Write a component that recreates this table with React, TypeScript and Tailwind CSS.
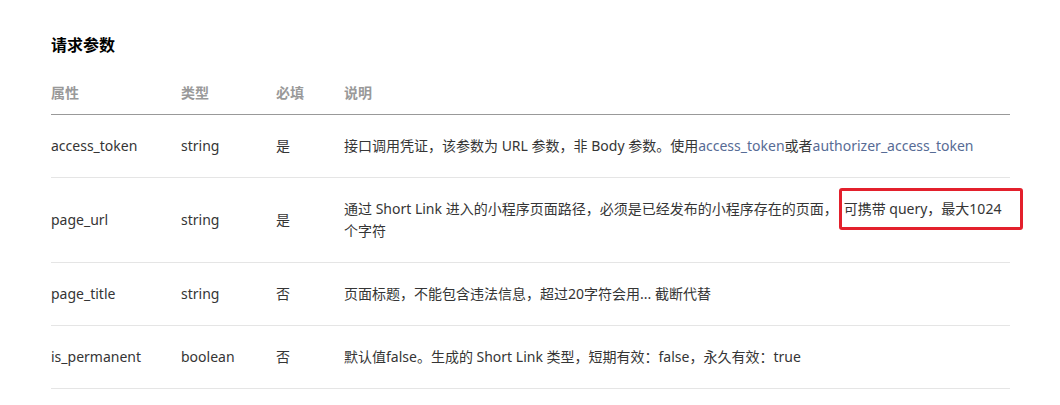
const LINK = 'text-[#576b95]';

type Row = {
  name: string;
  type: string;
  required: string;
  desc: React.ReactNode;
};

const ROWS: Row[] = [
  {
    name: 'access_token',
    type: 'string',
    required: '是',
    desc: (
      <>
        接口调用凭证，该参数为 URL 参数，非 Body 参数。使用<span className={LINK}>access_token</span>或者
        <span className={LINK}>authorizer_access_token</span>
      </>
    ),
  },
  {
    name: 'page_url',
    type: 'string',
    required: '是',
    desc: (
      <>
        通过 Short Link 进入的小程序页面路径，必须是已经发布的小程序存在的页面，
        <span className="relative ml-[6px] whitespace-nowrap">
          可携带 query，最大1024
          {/* red annotation box */}
          <span className="absolute -left-[5px] -right-[22px] -top-[11px] -bottom-[12px] border-[3px] border-[#e3202c] rounded-[3px] pointer-events-none" />
        </span>
        个字符
      </>
    ),
  },
  {
    name: 'page_title',
    type: 'string',
    required: '否',
    desc: '页面标题，不能包含违法信息，超过20字符会用... 截断代替',
  },
  {
    name: 'is_permanent',
    type: 'boolean',
    required: '否',
    desc: '默认值false。生成的 Short Link 类型，短期有效：false，永久有效：true',
  },
];

export default function App() {
  return (
    <div
      className="w-[1060px] h-[405px] bg-white pl-[51px] pr-[50px] pt-[33px] text-[#353535] overflow-hidden"
      style={{ fontFamily: '"Noto Sans", "Noto Sans CJK SC", sans-serif' }}
    >
      <h2 className="text-base leading-6 font-bold text-black">请求参数</h2>

      <table className="mt-[15px] w-full border-collapse text-sm leading-[22px]">
        <thead>
          <tr className="border-b border-[#999]">
            <th className="w-[130px] pt-[10px] pb-[10px] text-left font-bold text-[#999]">属性</th>
            <th className="w-[95px] pt-[10px] pb-[10px] text-left font-bold text-[#999]">类型</th>
            <th className="w-[68px] pt-[10px] pb-[10px] text-left font-bold text-[#999]">必填</th>
            <th className="pt-[10px] pb-[10px] text-left font-bold text-[#999]">说明</th>
          </tr>
        </thead>
        <tbody>
          {ROWS.map((row) => (
            <tr key={row.name} className="border-b border-[#e5e5e5]">
              <td className="py-5 align-middle">{row.name}</td>
              <td className="py-5 align-middle">{row.type}</td>
              <td className="py-5 align-middle">{row.required}</td>
              <td className="py-5 align-middle">{row.desc}</td>
            </tr>
          ))}
        </tbody>
      </table>
    </div>
  );
}
